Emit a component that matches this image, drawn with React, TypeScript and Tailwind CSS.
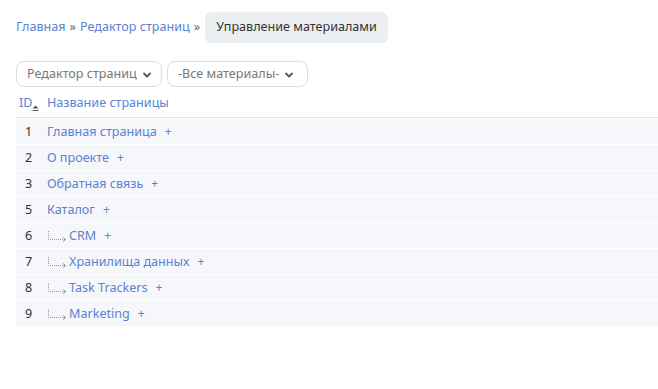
import React from "react";

interface PageRow {
  id: number;
  title: string;
  child?: boolean;
}

const rows: PageRow[] = [
  { id: 1, title: "Главная страница" },
  { id: 2, title: "О проекте" },
  { id: 3, title: "Обратная связь" },
  { id: 5, title: "Каталог" },
  { id: 6, title: "CRM", child: true },
  { id: 7, title: "Хранилища данных", child: true },
  { id: 8, title: "Task Trackers", child: true },
  { id: 9, title: "Marketing", child: true },
];

const Chevron = (): JSX.Element => (
  <svg width="10" height="10" viewBox="0 0 10 10" className="ml-[5px] mt-[1px] shrink-0">
    <path d="M2 3.5 L5 6.5 L8 3.5" fill="none" stroke="#555" strokeWidth="1.8" strokeLinecap="round" strokeLinejoin="round" />
  </svg>
);

const TreeArrow = (): JSX.Element => (
  <svg width="21" height="12" viewBox="0 0 21 12" className="mr-[1px] shrink-0">
    <path d="M1.5 1 V9.5 H18" fill="none" stroke="#999" strokeWidth="1" strokeDasharray="1 1" />
    <path d="M16 7.5 L18.5 9.5 L16 11.5" fill="none" stroke="#888" strokeWidth="1" />
  </svg>
);

export default function App(): JSX.Element {
  return (
    <div className="w-[658px] h-[389px] bg-white pl-[16px] pt-[12px] text-[12.6px] font-['Noto_Sans',sans-serif]">
      <div className="flex items-center h-[31px] whitespace-nowrap">
        <a className="text-[#5a82d2]">Главная</a>
        <span className="mx-[4px] text-[#666]">»</span>
        <a className="text-[#5a82d2]">Редактор страниц</a>
        <span className="ml-[4px] mr-[5px] text-[#666]">»</span>
        <span className="h-[31px] px-[11px] flex items-center rounded-[6px] bg-[#eceff1] text-[#333]">
          Управление материалами
        </span>
      </div>

      <div className="flex gap-[5px] mt-[18px] whitespace-nowrap">
        <div className="h-[26px] w-[146px] flex items-center pl-[10px] border border-[#ddd] rounded-[8px] text-[#777]">
          Редактор страниц
          <Chevron />
        </div>
        <div className="h-[26px] w-[141px] flex items-center pl-[10px] border border-[#ddd] rounded-[8px] text-[#777]">
          -Все материалы-
          <Chevron />
        </div>
      </div>

      <div className="mt-[3px]">
        <div className="flex items-center h-[28px] border-b border-[#e4e4e4] text-[#5a82d2]">
          <div className="w-[31px] pl-[3px] flex items-end">
            ID
            <svg width="7" height="7" viewBox="0 0 7 7" className="mb-[1px]">
              <path d="M0.5 3.5 L3.5 0.5 L6.5 3.5 Z" fill="#555" />
              <rect x="0.5" y="5" width="6" height="1" fill="#555" />
            </svg>
          </div>
          <div>Название страницы</div>
        </div>
        {rows.map((row) => (
          <div key={row.id} className="flex items-center h-[26px] border-t border-white bg-[#f6f7fb] pt-[1px]">
            <div className="w-[31px] pl-[9px] text-[#333]">{row.id}</div>
            <div className="flex items-center text-[#5a82d2]">
              {row.child && <TreeArrow />}
              <span>{row.title}</span>
              <span className="ml-[8px] text-[12px]">+</span>
            </div>
          </div>
        ))}
      </div>
    </div>
  );
}
